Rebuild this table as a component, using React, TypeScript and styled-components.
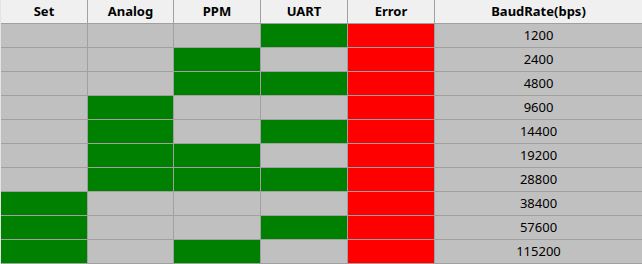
import React from 'react'
import styled, { createGlobalStyle } from 'styled-components'

const GlobalStyle = createGlobalStyle`
  html, body {
    margin: 0;
    padding: 0;
    background: #ffffff;
  }
  body {
    font-family: "Noto Sans", "Open Sans", sans-serif;
  }
`

type TState = 'off' | 'on' | 'error'

const Grid = styled.div`
  display: grid;
  grid-template-columns: 86px 85px 86px 86px 86px 1fr;
  grid-auto-rows: 23px;
  gap: 1px;
  width: 641px;
  background: #a0a0a0;
  border-left: 1px solid #e4e4e4;
  padding-bottom: 1px;
`
const HeaderCell = styled.div`
  background: #f0f0f0;
  color: #000000;
  font-size: 13px;
  font-weight: bold;
  line-height: 23px;
  text-align: center;
  white-space: nowrap;
`
const Cell = styled.div<{ $state: TState }>`
  background: ${({ $state }) =>
    $state === 'on' ? '#008000' : $state === 'error' ? '#ff0000' : '#c0c0c0'};
`
const RateCell = styled.div`
  background: #c0c0c0;
  color: #000000;
  font-size: 13px;
  line-height: 23px;
  text-align: center;
`

const headers = ['Set', 'Analog', 'PPM', 'UART', 'Error', 'BaudRate(bps)']
const rates = [1200, 2400, 4800, 9600, 14400, 19200, 28800, 38400, 57600, 115200]

function App() {
  return (
    <>
      <GlobalStyle />
      <Grid>
        {headers.map((h) => (
          <HeaderCell key={h}>{h}</HeaderCell>
        ))}
        {rates.map((rate, i) => {
          const code = i + 1
          const bits = [code & 8, code & 4, code & 2, code & 1]
          return (
            <React.Fragment key={rate}>
              {bits.map((b, j) => (
                <Cell key={j} $state={b ? 'on' : 'off'} />
              ))}
              <Cell $state="error" />
              <RateCell>{rate}</RateCell>
            </React.Fragment>
          )
        })}
      </Grid>
    </>
  )
}

export default App
